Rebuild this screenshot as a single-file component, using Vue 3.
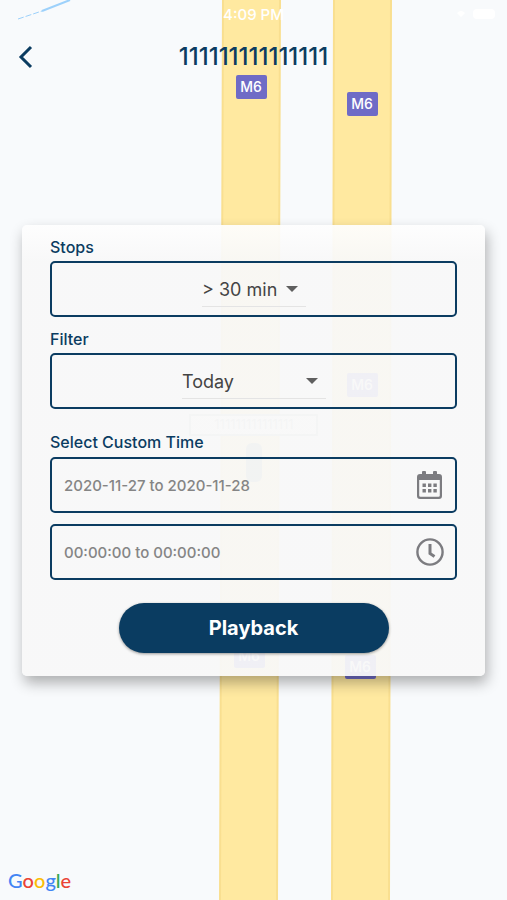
<template>
  <div class="playback-screen">
    <!-- map canvas behind everything -->
    <svg class="map" viewBox="0 0 507 900" preserveAspectRatio="xMidYMid slice" aria-hidden="true">
      <path class="river" d="M42 11L70 0" />
      <path class="river river-thin" d="M18 19L42 11" />
      <g class="road">
        <path d="M223 -2H280L277 902H220Z" />
        <path d="M334 -2H391L389 902H332Z" />
      </g>
      <g v-for="(sign, i) in roadSigns" :key="i">
        <rect class="sign" :x="sign.x - 15" :y="sign.y - 12" width="31" height="24" rx="2" />
        <text class="sign-text" :x="sign.x" :y="sign.y + 5">M6</text>
      </g>
      <rect class="info-box" x="190" y="415" width="127" height="20" />
      <text class="info-text" x="254" y="429">111111111111111</text>
      <rect class="vehicle" x="246" y="443" width="16" height="39" rx="6" />
    </svg>

    <div class="status-bar">
      <span class="status-time">4:09 PM</span>
      <svg class="status-icons" viewBox="0 0 44 14" aria-hidden="true">
        <path d="M2 6Q6 2 10 6L6 10Z" />
        <rect x="18" y="2" width="22" height="10" rx="4" />
      </svg>
    </div>

    <header class="top-bar">
      <button class="back-button" type="button" aria-label="Back">
        <svg viewBox="0 0 16 24"><path d="M13 2L3 12L13 22" /></svg>
      </button>
      <h1 class="title">111111111111111</h1>
    </header>

    <form class="card" @submit.prevent>
      <label class="field-label" for="stops">Stops</label>
      <div class="field select-field">
        <div class="select-wrap stops-wrap">
          <select id="stops" v-model="stops">
            <option v-for="option in stopOptions" :key="option">{{ option }}</option>
          </select>
          <svg class="arrow" viewBox="0 0 12 6"><path d="M0 0H12L6 6Z" /></svg>
        </div>
      </div>

      <label class="field-label filter-label" for="filter">Filter</label>
      <div class="field select-field">
        <div class="select-wrap filter-wrap">
          <select id="filter" v-model="filter">
            <option v-for="option in filterOptions" :key="option">{{ option }}</option>
          </select>
          <svg class="arrow" viewBox="0 0 12 6"><path d="M0 0H12L6 6Z" /></svg>
        </div>
      </div>

      <label class="field-label custom-label" for="dates">Select Custom Time</label>
      <div class="field">
        <input id="dates" v-model="dates" type="text" />
        <button class="icon-button" type="button" aria-label="Choose dates">
          <svg viewBox="0 0 28 30">
            <path class="fill" fill-rule="evenodd" d="M4 4H6V2Q6 1 7 1H9Q10 1 10 2V4H17V2Q17 1 18 1H20Q21 1 21 2V4H23Q26 4 26 7V26Q26 29 23 29H4Q1 29 1 26V7Q1 4 4 4ZM3.2 10V25.5Q3.2 26.8 4.5 26.8H22.5Q23.8 26.8 23.8 25.5V10Z" />
            <path class="fill" d="M6.5 13.5H9.9V17H6.5ZM12 13.5H15.4V17H12ZM17.4 13.5H20.8V17H17.4ZM6.5 19H9.9V22.5H6.5ZM12 19H15.4V22.5H12ZM17.4 19H20.8V22.5H17.4Z" />
          </svg>
        </button>
      </div>
      <div class="field time-field">
        <input v-model="times" type="text" aria-label="Time range" />
        <button class="icon-button" type="button" aria-label="Choose times">
          <svg viewBox="0 0 28 30">
            <circle class="line" cx="14" cy="15" r="12.6" />
            <path class="line hands" d="M14 7V16.5L18.5 19.5" />
          </svg>
        </button>
      </div>

      <button class="playback-button" type="submit">Playback</button>
    </form>

    <div class="google" aria-label="Google">
      <span v-for="(item, i) in googleLetters" :key="i" :class="item.color">{{ item.letter }}</span>
    </div>
  </div>
</template>

<script setup>
import { ref } from 'vue'

const stopOptions = ['> 30 min', '> 60 min']
const filterOptions = ['Today', 'Yesterday']

const stops = ref('> 30 min')
const filter = ref('Today')
const dates = ref('2020-11-27 to 2020-11-28')
const times = ref('00:00:00 to 00:00:00')

// centre points of the road signs on the map
const roadSigns = [
  { x: 251, y: 87 },
  { x: 362, y: 104 },
  { x: 362, y: 385 },
  { x: 249, y: 656 },
  { x: 360, y: 667 },
]

const googleLetters = [
  { letter: 'G', color: 'blue' },
  { letter: 'o', color: 'red' },
  { letter: 'o', color: 'yellow' },
  { letter: 'g', color: 'blue' },
  { letter: 'l', color: 'green' },
  { letter: 'e', color: 'red' },
]
</script>

<style>
body {
  margin: 0;
}
</style>

<style scoped>
.playback-screen {
  position: relative;
  display: flex;
  flex-direction: column;
  min-height: 100vh;
  overflow: hidden;
  background: #f8fafc;
  color: #0b3c61;
  font-family: Inter, sans-serif;
}

.playback-screen * {
  box-sizing: border-box;
}

/* --- map --- */
.map {
  position: absolute;
  inset: 0;
  width: 100%;
  height: 100%;
}

.river {
  fill: none;
  stroke: #9dd1fb;
  stroke-width: 2;
}

.river-thin {
  stroke-width: 1;
  stroke-dasharray: 6 2;
}

.road path {
  fill: #ffe9a0;
  stroke: #f9df90;
  stroke-width: 2;
}

.sign {
  fill: #6f6bc6;
}

.sign-text {
  fill: #fff;
  font-size: 14px;
  font-weight: 500;
  text-anchor: middle;
}

.info-box {
  fill: #fff;
  stroke: #b5c6c5;
  stroke-width: 2;
}

.info-text {
  fill: #b4c0c0;
  font-size: 13px;
  text-anchor: middle;
}

.vehicle {
  fill: #8fa39a;
}

/* --- header --- */
.status-bar {
  position: relative;
  display: grid;
  grid-template-columns: 1fr auto 1fr;
  align-items: center;
  height: 28px;
  padding: 0 8px;
  color: #fff;
}

.status-time {
  grid-column: 2;
  font-size: 15px;
  font-weight: 500;
}

.status-icons {
  width: 44px;
  height: 14px;
  justify-self: end;
  fill: #fff;
}

.top-bar {
  position: relative;
  display: grid;
  grid-template-columns: 48px 1fr 48px;
  align-items: center;
  height: 58px;
}

.back-button {
  display: flex;
  padding: 0 0 0 18px;
  border: none;
  background: none;
  cursor: pointer;
}

.back-button svg {
  width: 16px;
  height: 24px;
  fill: none;
  stroke: #0b3c61;
  stroke-width: 3;
}

.title {
  margin: 0;
  font-size: 24px;
  font-weight: 500;
  line-height: 28px;
  text-align: center;
}

/* --- card --- */
.card {
  position: relative;
  display: flex;
  flex-direction: column;
  margin: 139px 22px 0;
  padding: 12px 28px 23px;
  border-radius: 5px;
  background: linear-gradient(rgba(254, 254, 254, 0.93), rgba(248, 248, 248, 0.94) 36px);
  box-shadow: 2px 7px 14px rgba(0, 0, 0, 0.3);
}

.field-label {
  margin-bottom: 4px;
  font-size: 16px;
  font-weight: 500;
  line-height: 20px;
}

.filter-label {
  margin-top: 12px;
}

.custom-label {
  margin: 23px 0 5px;
}

.field {
  display: flex;
  align-items: center;
  height: 56px;
  padding: 0 11px 0 12px;
  border: 2px solid #0b3c61;
  border-radius: 5px;
}

.time-field {
  margin-top: 11px;
}

.select-field {
  justify-content: center;
}

.select-wrap {
  display: grid;
  align-items: center;
  height: 35px;
  border-bottom: 1px solid #e4e4e4;
}

.stops-wrap {
  width: 104px;
}

.filter-wrap {
  width: 144px;
}

.select-wrap select,
.arrow {
  grid-area: 1 / 1;
}

.select-wrap select {
  width: 100%;
  padding: 2px 0 0;
  border: none;
  background: none;
  color: #444;
  font-family: Inter, sans-serif;
  font-size: 18px;
  line-height: 24px;
  appearance: none;
}

.arrow {
  justify-self: end;
  width: 12px;
  height: 6px;
  margin-right: 8px;
  fill: #5f5f5f;
  pointer-events: none;
}

.field input {
  flex: 1;
  min-width: 0;
  padding: 0;
  border: none;
  outline: none;
  background: none;
  color: #858585;
  font-family: Inter, sans-serif;
  font-size: 15px;
  font-weight: 500;
}

.icon-button {
  display: flex;
  padding: 0;
  border: none;
  background: none;
  cursor: pointer;
}

.icon-button svg {
  width: 28px;
  height: 30px;
}

.icon-button .fill {
  fill: #7c7c80;
}

.icon-button .line {
  fill: none;
  stroke: #7c7c80;
  stroke-width: 2.4;
}

.icon-button .hands {
  stroke-width: 3;
}

.playback-button {
  align-self: center;
  width: 270px;
  max-width: 100%;
  height: 50px;
  margin-top: 23px;
  border: none;
  border-radius: 25px;
  background: #0a3c61;
  box-shadow: 0 1px 3px rgba(0, 0, 0, 0.4);
  color: #fff;
  font-family: Inter, sans-serif;
  font-size: 20px;
  font-weight: 700;
  cursor: pointer;
}

/* --- google logo --- */
.google {
  position: relative;
  display: flex;
  margin-top: auto;
  padding: 0 8px 8px;
  font-family: Lato, sans-serif;
  font-size: 20px;
  font-weight: 500;
  line-height: 24px;
}

.blue {
  color: #4285f4;
}

.red {
  color: #ea4335;
}

.yellow {
  color: #fbbc05;
}

.green {
  color: #34a853;
}
</style>
